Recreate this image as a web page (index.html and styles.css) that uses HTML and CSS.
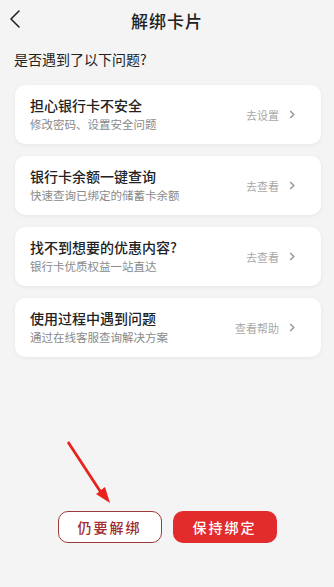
FILE: index.html
```html
<!DOCTYPE html>
<html lang="zh-CN">
<head>
    <meta charset="UTF-8">
    <meta name="viewport" content="width=device-width, initial-scale=1.0">
    <title>解绑卡片</title>
    <link rel="stylesheet" href="styles.css">
</head>
<body>
    <header class="nav">
        <svg class="back" width="12" height="20" viewBox="0 0 12 20">
            <path d="M10 2 L2 10 L10 18" fill="none" stroke="#222" stroke-width="1.6" stroke-linecap="round" stroke-linejoin="round"/>
        </svg>
        <div class="nav-title">解绑卡片</div>
    </header>

    <div class="question">是否遇到了以下问题?</div>

    <div class="list">
        <div class="card">
            <div class="card-text">
                <div class="card-title">担心银行卡不安全</div>
                <div class="card-sub">修改密码、设置安全问题</div>
            </div>
            <div class="card-action">去设置<svg class="chev" width="6" height="9" viewBox="0 0 6 9"><path d="M1.2 1 L4.8 4.5 L1.2 8" fill="none" stroke="#999" stroke-width="1.5"/></svg></div>
        </div>
        <div class="card">
            <div class="card-text">
                <div class="card-title">银行卡余额一键查询</div>
                <div class="card-sub">快速查询已绑定的储蓄卡余额</div>
            </div>
            <div class="card-action">去查看<svg class="chev" width="6" height="9" viewBox="0 0 6 9"><path d="M1.2 1 L4.8 4.5 L1.2 8" fill="none" stroke="#999" stroke-width="1.5"/></svg></div>
        </div>
        <div class="card">
            <div class="card-text">
                <div class="card-title">找不到想要的优惠内容?</div>
                <div class="card-sub">银行卡优质权益一站直达</div>
            </div>
            <div class="card-action">去查看<svg class="chev" width="6" height="9" viewBox="0 0 6 9"><path d="M1.2 1 L4.8 4.5 L1.2 8" fill="none" stroke="#999" stroke-width="1.5"/></svg></div>
        </div>
        <div class="card">
            <div class="card-text">
                <div class="card-title">使用过程中遇到问题</div>
                <div class="card-sub">通过在线客服查询解决方案</div>
            </div>
            <div class="card-action">查看帮助<svg class="chev" width="6" height="9" viewBox="0 0 6 9"><path d="M1.2 1 L4.8 4.5 L1.2 8" fill="none" stroke="#999" stroke-width="1.5"/></svg></div>
        </div>
    </div>

    <div class="buttons">
        <button class="btn btn-outline">仍要解绑</button>
        <button class="btn btn-solid">保持绑定</button>
    </div>

    <!-- red annotation arrow pointing at the unbind button -->
    <svg class="pointer" width="60" height="75" viewBox="0 0 60 75">
        <path d="M4 3 L36 52 L40 49 L45 65 L31 56 L34 54 L2 5 Z" fill="#e8231f"/>
    </svg>
</body>
</html>
```

FILE: styles.css
```css
html, body {
    margin: 0;
    padding: 0;
}
body {
    background-color: #f4f4f4;
    font-family: "Noto Sans CJK SC", "Noto Sans", sans-serif;
    color: #222;
    width: 334px;
    height: 587px;
    position: relative;
    overflow: hidden;
}

.nav {
    height: 40px;
    display: flex;
    align-items: center;
    justify-content: center;
    position: relative;
}
.back {
    position: absolute;
    left: 9px;
    top: 9px;
}
.nav-title {
    font-size: 17px;
    font-weight: 500;
    letter-spacing: 1px;
}

.question {
    font-size: 14px;
    padding: 9px 14px 0;
    line-height: 20px;
}

.list {
    padding: 16px 13px 0 15px;
    display: flex;
    flex-direction: column;
    gap: 12px;
}
.card {
    background: #fff;
    border-radius: 10px;
    height: 59px;
    box-shadow: 0 1px 4px rgba(0, 0, 0, 0.06);
    display: flex;
    align-items: center;
    padding: 0 26px 0 15px;
}
.card-text {
    flex: 1;
}
.card-title {
    font-size: 14px;
    font-weight: 500;
    line-height: 19px;
}
.card-sub {
    font-size: 11.5px;
    color: #8a8a8a;
    line-height: 17px;
    margin-top: 1px;
}
.card-action {
    font-size: 11px;
    color: #a8a8a8;
    display: flex;
    align-items: center;
}
.chev {
    margin-left: 10px;
}

.buttons {
    display: flex;
    justify-content: center;
    gap: 11px;
    margin-top: 154px;
}
.btn {
    width: 104px;
    height: 32px;
    border-radius: 10px;
    font-family: "Noto Sans CJK SC", sans-serif;
    font-size: 14px;
    letter-spacing: 2px;
    font-weight: 500;
}
.btn-outline {
    background: #fff;
    border: 1px solid #9c3b3b;
    color: #a12d2d;
}
.btn-solid {
    background: #e22b2b;
    border: none;
    color: #fff;
}

.pointer {
    position: absolute;
    left: 65px;
    top: 438px;
}
```
